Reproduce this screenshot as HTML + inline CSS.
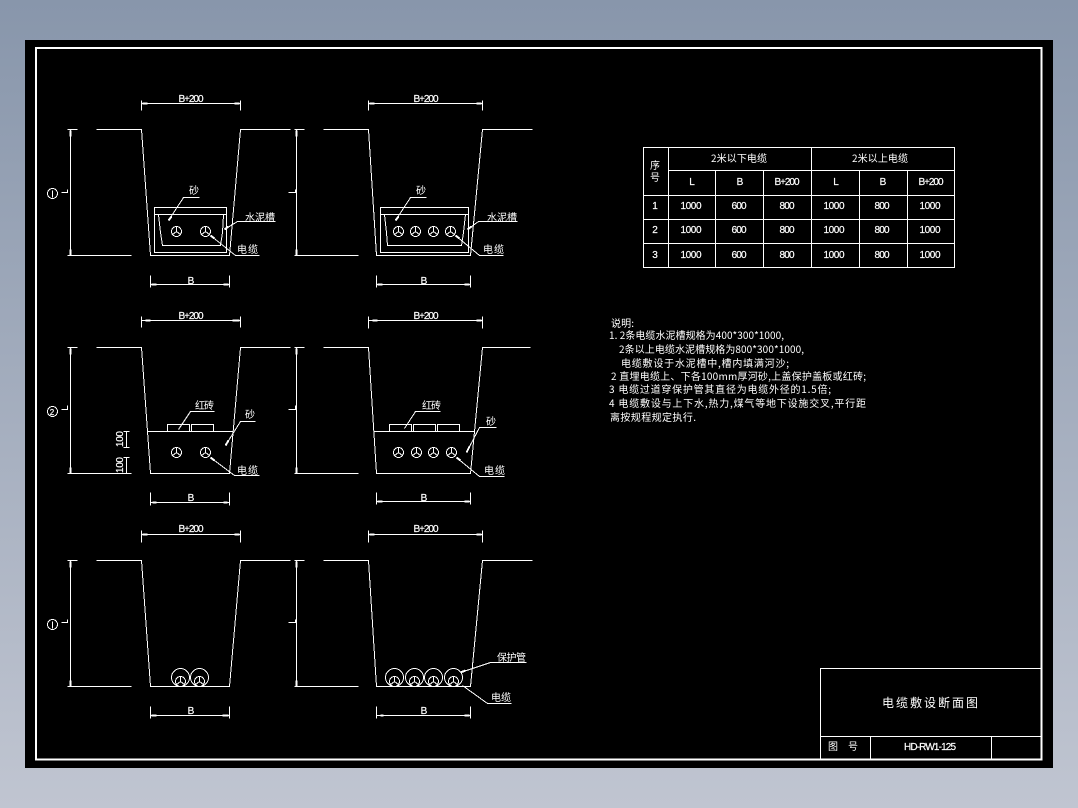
<!DOCTYPE html>
<html><head><meta charset="utf-8"><style>
html,body{margin:0;padding:0;width:1078px;height:808px;overflow:hidden;background:linear-gradient(#8896ab,#c0c5d1)}
svg{position:absolute;left:0;top:0}
.l{fill:none;stroke:#fff;stroke-width:1;shape-rendering:crispEdges}
.a{fill:none;stroke:#fff;stroke-width:2;shape-rendering:crispEdges}
text{fill:#fff;font-family:"WenQuanYi Zen Hei","Noto Sans CJK SC",sans-serif;font-size:10px}
.m{text-anchor:middle}
.n{font-family:"Liberation Sans",sans-serif;font-size:10px;stroke:#fff;stroke-width:.2}
</style></head><body>
<svg width="1078" height="808" viewBox="0 0 1078 808">
<rect x="25" y="40" width="1028" height="728" fill="#000"/>
<rect x="36" y="48" width="1005.5" height="711.5" fill="none" stroke="#fff" stroke-width="2" shape-rendering="crispEdges"/>
<defs>
<g id="c"><circle r="5" class="l"/><path class="l" d="M0 0V-5M0 0L-4 3M0 0L4 3"/></g>
<g id="p"><circle r="9" class="l"/></g>
</defs>
<g transform="translate(.5 .5)">
<!-- trench 1 -->
<path class="l" d="M96 129H141L150 255H229L240 129H290"/>
<path class="l" d="M70 129V255M67 129H77M67 255H131"/>
<path class="a" d="M70 130V136M70 249V255"/>
<path class="l" d="M141 103H240M141 100V110M240 100V110"/><path class="a" d="M142 103H147M234 103H239"/>
<path class="l" d="M150 284H229M150 275V287M229 275V287"/><path class="a" d="M151 284H156M223 284H228"/>
<path class="l" d="M154 207H226V252H154ZM154 214H226M158 214L160 232L162 245H220L222 232L223 214"/>
<use href="#c" x="176" y="231"/><use href="#c" x="205" y="231"/>
<path class="l" d="M168 220L183 197H199M224 229L237 221H275M210 235L235 255H259"/><path class="a" d="M168 220L171 216M224 229L228 226M210 235L214 238"/>
<circle cx="52" cy="193" r="5" class="l"/><path class="l" d="M52 190V197M61 192H67V189M288 192H295V189"/>
<!-- trench 2 -->
<path class="l" d="M323 129H368L376 255H470L482 129H532"/>
<path class="l" d="M296 129V255M294 129H304M294 255H358"/>
<path class="a" d="M296 130V136M296 249V255"/>
<path class="l" d="M368 103H482M368 100V110M482 100V110"/><path class="a" d="M369 103H374M476 103H481"/>
<path class="l" d="M376 284H470M376 275V287M470 275V287"/><path class="a" d="M377 284H382M464 284H469"/>
<path class="l" d="M380 207H468V252H380ZM380 214H468M384 214L386 232L387 245H461L463 232L465 214"/>
<use href="#c" x="398" y="231"/><use href="#c" x="415" y="231"/><use href="#c" x="433" y="231"/><use href="#c" x="450" y="231"/>
<path class="l" d="M395 220L410 197H426M467 229L478 221H517M455 235L479 255H503"/><path class="a" d="M395 220L398 216M467 229L471 226M455 235L459 238"/>
<!-- trench 3 -->
<path class="l" d="M96 347H141L150 473H229L240 347H290"/>
<path class="l" d="M70 347V473M67 347H77M67 473H131M147 431H233"/>
<path class="a" d="M70 348V354M70 467V473"/>
<path class="l" d="M141 320H240M141 316V327M240 316V327"/><path class="a" d="M145 320H150M232 320H239"/>
<path class="l" d="M150 502H229M150 492V505M229 492V505"/><path class="a" d="M152 502H156M223 502H227"/>
<path class="l" d="M167 424H189V431H167ZM191 424H213V431H191Z"/>
<use href="#c" x="176" y="452"/><use href="#c" x="205" y="452"/>
<path class="l" d="M178 429L190 411H214M225 445L240 421H255M210 457L234 475H259"/><path class="a" d="M225 445L228 440M210 457L214 460"/>
<path class="l" d="M126 431V447M123 431H129M123 447H129M126 457V473M123 457H129"/>
<circle cx="52" cy="411" r="5" class="l"/><path class="l" d="M61 409H67V405M288 409H295V405"/>
<!-- trench 4 -->
<path class="l" d="M323 347H368L376 473H470L482 347H530"/>
<path class="l" d="M296 347V473M294 347H304M294 473H358M374 431H474"/>
<path class="a" d="M296 348V354M296 467V473"/>
<path class="l" d="M368 320H482M368 316V328M482 316V328"/><path class="a" d="M372 320H377M476 320H481"/>
<path class="l" d="M376 501H470M376 492V504M470 492V504"/><path class="a" d="M377 501H382M464 501H469"/>
<path class="l" d="M389 424H411V431H389ZM413 424H435V431H413ZM437 424H459V431H437Z"/>
<use href="#c" x="398" y="452"/><use href="#c" x="416" y="452"/><use href="#c" x="433" y="452"/><use href="#c" x="451" y="452"/>
<path class="l" d="M404 428L415 411H440M466 452L479 427H496M456 457L479 476H504"/><path class="a" d="M466 452L469 446M456 457L460 460"/>
<!-- trench 5 -->
<path class="l" d="M96 560H141L150 686H229L240 560H290"/>
<path class="l" d="M70 560V686M67 560H77M67 686H131"/>
<path class="a" d="M70 561V567M70 680V686"/>
<path class="l" d="M141 534H240M141 530V542M240 530V542"/><path class="a" d="M142 534H147M234 534H239"/>
<path class="l" d="M150 715H229M150 706V718M229 706V718"/><path class="a" d="M151 715H156M222 715H228"/>
<use href="#p" x="180" y="677"/><use href="#p" x="199" y="677"/><use href="#c" x="180" y="681"/><use href="#c" x="199" y="681"/>
<circle cx="52" cy="624" r="5" class="l"/><path class="l" d="M52 621V628M61 622H67V619M288 622H295V619"/>
<!-- trench 6 -->
<path class="l" d="M323 560H368L376 686H470L482 560H532"/>
<path class="l" d="M296 560V686M294 560H304M294 686H358"/>
<path class="a" d="M296 561V567M296 680V686"/>
<path class="l" d="M368 534H482M368 530V542M482 530V542"/><path class="a" d="M369 534H374M476 534H481"/>
<path class="l" d="M376 715H470M376 706V718M470 706V718"/><path class="a" d="M380 715H383M464 715H469"/>
<use href="#p" x="394" y="677"/><use href="#p" x="414" y="677"/><use href="#p" x="433" y="677"/><use href="#p" x="453" y="677"/>
<use href="#c" x="394" y="681"/><use href="#c" x="414" y="681"/><use href="#c" x="433" y="681"/><use href="#c" x="453" y="681"/>
<path class="l" d="M460 672L490 662H526M462 685L487 703H511"/><path class="a" d="M460 672L465 670"/>
<!-- table -->
<path class="l" d="M643 147H954V267H643ZM668 147V267M811 147V267M668 170H954M643 195H954M643 219H954M643 243H954M715 170V267M763 170V267M859 170V267M907 170V267"/>
<!-- title block -->
<path class="l" d="M820 760V668H1041M820 736H1041M870 736V760M991 736V760"/>
</g>
<!-- dimension labels -->
<g>
<text class="m n" x="191" y="102" textLength="25">B+200</text><text class="m n" x="426" y="102" textLength="25">B+200</text>
<text class="m n" x="191" y="319" textLength="25">B+200</text><text class="m n" x="426" y="319" textLength="25">B+200</text>
<text class="m n" x="191" y="532" textLength="25">B+200</text><text class="m n" x="426" y="532" textLength="25">B+200</text>
<text class="m n" x="191" y="284">B</text><text class="m n" x="424" y="284">B</text>
<text class="m n" x="191" y="501">B</text><text class="m n" x="424" y="501">B</text>
<text class="m n" x="191" y="714">B</text><text class="m n" x="424" y="714">B</text>
<text class="m n" transform="translate(123 439) rotate(-90)" textLength="16">100</text>
<text class="m n" transform="translate(123 465) rotate(-90)" textLength="16">100</text>
<text class="m n" x="52" y="415" style="font-size:8px">2</text>
</g>
<!-- chinese labels -->
<text class="m" x="194" y="194">砂</text>
<text x="245" y="221" textLength="30">水泥槽</text>
<text x="237" y="253" textLength="21">电缆</text>
<text class="m" x="421" y="194">砂</text>
<text x="487" y="221" textLength="30">水泥槽</text>
<text x="483" y="253" textLength="21">电缆</text>
<text x="195" y="409" textLength="19">红砖</text>
<text class="m" x="250" y="418">砂</text>
<text x="237" y="474" textLength="21">电缆</text>
<text x="422" y="409" textLength="19">红砖</text>
<text class="m" x="491" y="425">砂</text>
<text x="484" y="474" textLength="21">电缆</text>
<text x="497" y="661" textLength="29">保护管</text>
<text x="491" y="701" textLength="20">电缆</text>
<!-- table text -->
<text class="m" x="655" y="169">序</text><text class="m" x="655" y="181">号</text>
<text x="711" y="162" textLength="56">2米以下电缆</text><text x="852" y="162" textLength="56">2米以上电缆</text>
<g>
<text class="m n" x="692" y="185">L</text><text class="m n" x="740" y="185">B</text><text class="m n" x="787" y="185" textLength="25">B+200</text>
<text class="m n" x="836" y="185">L</text><text class="m n" x="883" y="185">B</text><text class="m n" x="931" y="185" textLength="25">B+200</text>
<text class="m n" x="655" y="209">1</text><text class="m n" x="691" y="209" textLength="21">1000</text><text class="m n" x="739" y="209" textLength="15">600</text><text class="m n" x="787" y="209" textLength="15">800</text><text class="m n" x="834" y="209" textLength="21">1000</text><text class="m n" x="882" y="209" textLength="15">800</text><text class="m n" x="930" y="209" textLength="21">1000</text>
<text class="m n" x="655" y="233">2</text><text class="m n" x="691" y="233" textLength="21">1000</text><text class="m n" x="739" y="233" textLength="15">600</text><text class="m n" x="787" y="233" textLength="15">800</text><text class="m n" x="834" y="233" textLength="21">1000</text><text class="m n" x="882" y="233" textLength="15">800</text><text class="m n" x="930" y="233" textLength="21">1000</text>
<text class="m n" x="655" y="258">3</text><text class="m n" x="691" y="258" textLength="21">1000</text><text class="m n" x="739" y="258" textLength="15">600</text><text class="m n" x="787" y="258" textLength="15">800</text><text class="m n" x="834" y="258" textLength="21">1000</text><text class="m n" x="882" y="258" textLength="15">800</text><text class="m n" x="930" y="258" textLength="21">1000</text>
</g>
<!-- notes -->
<text x="611" y="327" textLength="23">说明:</text>
<text x="609" y="339" textLength="175">1. 2条电缆水泥槽规格为400*300*1000,</text>
<text x="619" y="353" textLength="185">2条以上电缆水泥槽规格为800*300*1000,</text>
<text x="621" y="367" textLength="168">电缆敷设于水泥槽中,槽内填满河沙;</text>
<text x="611" y="380" textLength="255">2 直埋电缆上、下各100mm厚河砂,上盖保护盖板或红砖;</text>
<text x="609" y="393" textLength="222">3 电缆过道穿保护管其直径为电缆外径的1.5倍;</text>
<text x="609" y="407" textLength="257">4 电缆敷设与上下水,热力,煤气等地下设施交叉,平行距</text>
<text x="610" y="421" textLength="86">离按规程规定执行.</text>
<!-- title -->
<text x="882" y="707" textLength="96" style="font-size:12px">电缆敷设断面图</text>
<text class="m" x="833" y="750">图</text><text class="m" x="853" y="750">号</text>
<text class="m n" x="930" y="750" textLength="52">HD-RW1-125</text>
</svg>
</body></html>
